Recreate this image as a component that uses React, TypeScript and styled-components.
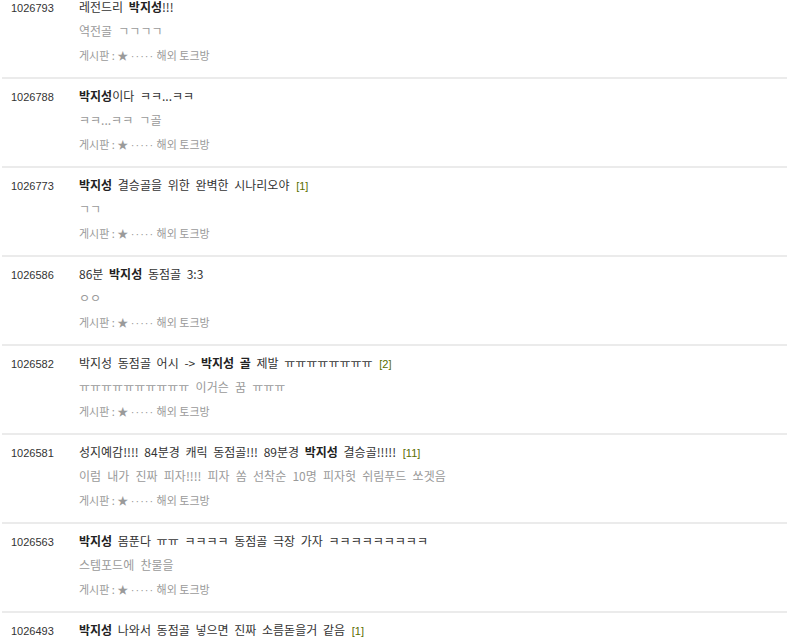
import React from 'react';
import styled, { createGlobalStyle } from 'styled-components';

const GlobalStyle = createGlobalStyle`
  body {
    margin: 0;
    background: #ffffff;
    font-family: "Noto Sans CJK KR", "Liberation Sans", sans-serif;
  }
`;

const List = styled.ul`
  list-style: none;
  margin: 0;
  padding: 0;
  width: 787px;
`;

const Item = styled.li`
  display: flex;
  margin-left: 2px;
  padding: 10px 0 15px;
  border-bottom: 2px solid #ebebeb;

  &:first-child {
    padding-top: 0;
  }
`;

const Num = styled.div`
  width: 68px;
  height: 14px;
  padding: 1px 0 0 9px;
  font-family: "Liberation Sans", Arial, sans-serif;
  font-size: 11px;
  line-height: 14px;
  color: #333;
`;

const Body = styled.div`
  flex: 1;
  display: flex;
  flex-direction: column;
  gap: 10px;
`;

const Line = styled.div`
  height: 14px;
  line-height: 14px;
  white-space: nowrap;
  word-spacing: 3px;
`;

const Title = styled(Line)`
  font-size: 12px;
  color: #333;

  b {
    font-weight: bold;
    color: #222;
  }
`;

const Count = styled.span`
  margin-left: 1px;
  font-family: "Liberation Sans", Arial, sans-serif;
  font-size: 11px;
  line-height: 1;
  color: #5a6e00;
`;

const Sub = styled(Line)`
  font-size: 12px;
  color: #9a9a9a;
  word-spacing: 3.5px;
`;

const Meta = styled(Line)`
  font-size: 11px;
  color: #9a9a9a;
  word-spacing: 0;
`;

const Dots = styled.span`
  font-family: "Liberation Sans", Arial, sans-serif;
  letter-spacing: 1px;
  line-height: 1;
`;

type Post = {
  id: string;
  title: React.ReactNode;
  sub: string;
  count?: number;
};

const B = ({ children }: { children: React.ReactNode }) => <b>{children}</b>;

const posts: Post[] = [
  { id: '1026793', title: <>레전드리 <B>박지성</B>!!!</>, sub: '역전골 ㄱㄱㄱㄱ' },
  { id: '1026788', title: <><B>박지성</B>이다 ㅋㅋ...ㅋㅋ</>, sub: 'ㅋㅋ...ㅋㅋ ㄱ골' },
  { id: '1026773', title: <><B>박지성</B> 결승골을 위한 완벽한 시나리오야</>, sub: 'ㄱㄱ', count: 1 },
  { id: '1026586', title: <>86분 <B>박지성</B> 동점골 3:3</>, sub: 'ㅇㅇ' },
  { id: '1026582', title: <>박지성 동점골 어시 -&gt; <B>박지성</B> <B>골</B> 제발 ㅠㅠㅠㅠㅠㅠㅠㅠ</>, sub: 'ㅠㅠㅠㅠㅠㅠㅠㅠㅠㅠ 이거슨 꿈 ㅠㅠㅠ', count: 2 },
  { id: '1026581', title: <>성지예감!!!! 84분경 캐릭 동점골!!! 89분경 <B>박지성</B> 결승골!!!!!</>, sub: '이럼 내가 진짜 피자!!!! 피자 쏨 선착순 10명 피자헛 쉬림푸드 쏘겟음', count: 11 },
  { id: '1026563', title: <><B>박지성</B> 몸푼다 ㅠㅠ ㅋㅋㅋㅋ 동점골 극장 가자 ㅋㅋㅋㅋㅋㅋㅋㅋㅋ</>, sub: '스템포드에 찬물을' },
  { id: '1026493', title: <><B>박지성</B> 나와서 동점골 넣으면 진짜 소름돋을거 같음</>, sub: '', count: 1 },
];

export default function App() {
  return (
    <>
      <GlobalStyle />
      <List>
        {posts.map((p) => (
          <Item key={p.id}>
            <Num>{p.id}</Num>
            <Body>
              <Title>
                {p.title}
                {p.count !== undefined && <> <Count>[{p.count}]</Count></>}
              </Title>
              <Sub>{p.sub}</Sub>
              <Meta>
                게시판 : ★ <Dots>·····</Dots> 해외 토크방
              </Meta>
            </Body>
          </Item>
        ))}
      </List>
    </>
  );
}
